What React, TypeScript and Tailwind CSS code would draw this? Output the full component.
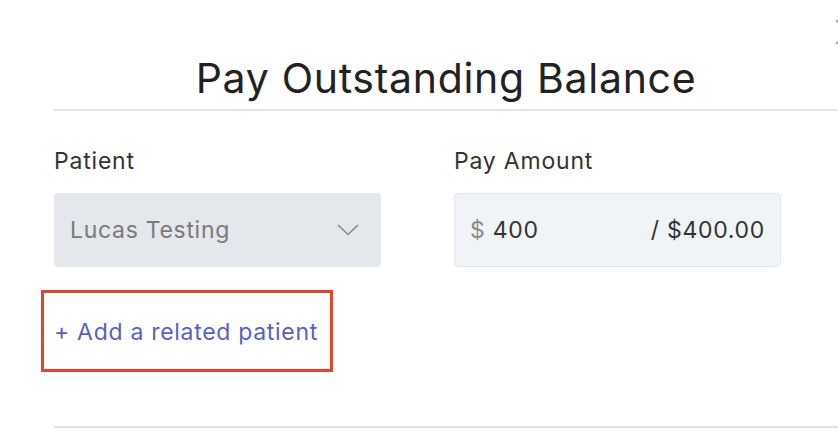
import React from "react";

export default function App() {
  return (
    <div
      className="relative w-[838px] h-[444px] overflow-hidden bg-white"
      style={{ fontFamily: "Inter, 'Noto Sans', sans-serif" }}
    >
      <svg className="absolute left-[834px] top-[18px]" width="26" height="28" viewBox="0 0 26 28" fill="none">
        <path d="M2 2 L24 26 M2 26 L24 2" stroke="#9a9a9a" strokeWidth="1.6" />
      </svg>
      <div className="ml-[54px] w-[784px] pt-[52px]">
        <h1 className="text-center text-[41px] leading-[52px] text-[#222] font-normal tracking-[0.7px]">
          Pay Outstanding Balance
        </h1>
        <div className="mt-[5px] h-[2px] bg-[#e2e2e2]" />
        <div className="mt-[37px] flex gap-[73px]">
          <div className="w-[327px]">
            <div className="text-[23px] leading-[26px] text-[#333] tracking-[0.8px]">Patient</div>
            <div className="mt-[19px] h-[74px] rounded-[4px] bg-[#e4e7eb] flex items-center justify-between pl-[16px] pr-[22px]">
              <span className="text-[23px] text-[#7a7a7a] tracking-[0.7px]">Lucas Testing</span>
              <svg width="22" height="12" viewBox="0 0 22 12" fill="none">
                <path d="M1 1 L11 10.5 L21 1" stroke="#8a8a8a" strokeWidth="1.6" />
              </svg>
            </div>
          </div>
          <div className="w-[327px]">
            <div className="text-[23px] leading-[26px] text-[#333] tracking-[0.8px]">Pay Amount</div>
            <div className="mt-[19px] h-[74px] rounded-[4px] bg-[#f1f4f7] border border-[#e3e7eb] flex items-center justify-between pl-[15px] pr-[15px]">
              <span className="text-[23px] text-[#333] tracking-[0.7px]">
                <span className="text-[#8a8a8a]">$</span> 400
              </span>
              <span className="text-[23px] text-[#333] tracking-[0.7px]">/ $400.00</span>
            </div>
          </div>
        </div>
        <div className="mt-[23px] ml-[-13px] w-[292px] h-[82px] border-[3px] border-[#e0452f] flex items-center pl-[10px]">
          <span className="text-[23px] text-[#5a5fc4] pt-[2px] tracking-[0.7px]">+ Add a related patient</span>
        </div>
        <div className="mt-[54px] h-[2px] bg-[#e2e2e2]" />
      </div>
    </div>
  );
}
